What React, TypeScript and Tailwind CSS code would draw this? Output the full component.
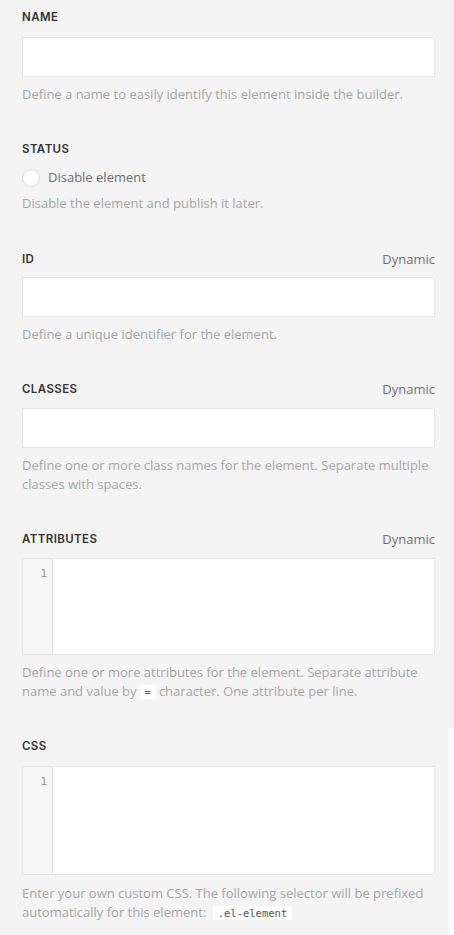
import React from "react";

const body = { fontFamily: '"Open Sans", "Liberation Sans", sans-serif' };
const head = { fontFamily: 'Inter, "Liberation Sans", sans-serif' };
const mono = { fontFamily: '"DejaVu Sans Mono", "Liberation Mono", monospace' };

function Label({ text, dynamic }: { text: string; dynamic?: boolean }) {
  return (
    <div className="flex h-5 items-center justify-between">
      <span style={head} className="text-[11.5px] font-semibold tracking-[0.4px] text-[#333]">
        {text}
      </span>
      {dynamic && (
        <span style={body} className="text-[13px] text-[#707070]">
          Dynamic
        </span>
      )}
    </div>
  );
}

function Desc({ children, mt = "mt-2" }: { children: React.ReactNode; mt?: string }) {
  return (
    <p style={body} className={`${mt} text-[13px] leading-[19px] text-[#a6a6a6]`}>
      {children}
    </p>
  );
}

function Input() {
  return <div className="mt-2 h-10 border border-[#e6e6e6] bg-white" />;
}

function Editor({ h, mt }: { h: string; mt: string }) {
  return (
    <div className={`${mt} flex border border-[#e6e6e6] bg-white ${h}`}>
      <div className="w-[30px] border-r border-[#e2e2e2] bg-[#f7f7f7] pr-[5px] pt-[8px] text-right">
        <span style={mono} className="block text-[11px] leading-[14px] text-[#999]">
          1
        </span>
      </div>
      <div className="flex-1" />
    </div>
  );
}

function Code({ children }: { children: React.ReactNode }) {
  return (
    <code
      style={mono}
      className="mx-[3px] inline-block bg-white px-[5px] align-middle text-[10.5px] leading-[14px] text-[#555]"
    >
      {children}
    </code>
  );
}

export default function App() {
  return (
    <div className="flex min-h-[935px] w-[454px] bg-[#f4f4f4]">
      <div className="flex w-[449px] flex-col gap-[33px] pl-[22px] pr-[14px] pt-2">
        <section>
          <Label text="NAME" />
          <div className="mt-[9px] h-10 border border-[#e6e6e6] bg-white" />
          <Desc>Define a name to easily identify this element inside the builder.</Desc>
        </section>

        <section className="mt-[3px]">
          <Label text="STATUS" />
          <div className="mt-2 flex items-center gap-2">
            <span className="h-[18px] w-[18px] rounded-full border border-[#dcdcdc] bg-white" />
            <span style={body} className="text-[13px] text-[#6d6d6d]">
              Disable element
            </span>
          </div>
          <Desc mt="mt-[6px]">Disable the element and publish it later.</Desc>
        </section>

        <section className="mt-[4px]">
          <Label text="ID" dynamic />
          <div className="mt-[7px] h-10 border border-[#e6e6e6] bg-white" />
          <Desc mt="mt-[8px]">Define a unique identifier for the element.</Desc>
        </section>

        <section className="mt-[3px]">
          <Label text="CLASSES" dynamic />
          <Input />
          <Desc>
            Define one or more class names for the element. Separate multiple classes with spaces.
          </Desc>
        </section>

        <section className="mt-[3px]">
          <Label text="ATTRIBUTES" dynamic />
          <Editor h="h-[97px]" mt="mt-2" />
          <Desc>
            Define one or more attributes for the element. Separate attribute name and value by
            <Code>=</Code>
            character. One attribute per line.
          </Desc>
        </section>

        <section className="mt-[3px]">
          <Label text="CSS" />
          <Editor h="h-[109px]" mt="mt-[9px]" />
          <Desc mt="mt-[9px]">
            Enter your own custom CSS. The following selector will be prefixed automatically for this
            element: <Code>.el-element</Code>
          </Desc>
        </section>
      </div>
      <div className="flex w-[5px] flex-col">
        <div className="h-[728px]" />
        <div className="flex-1 bg-white" />
      </div>
    </div>
  );
}
